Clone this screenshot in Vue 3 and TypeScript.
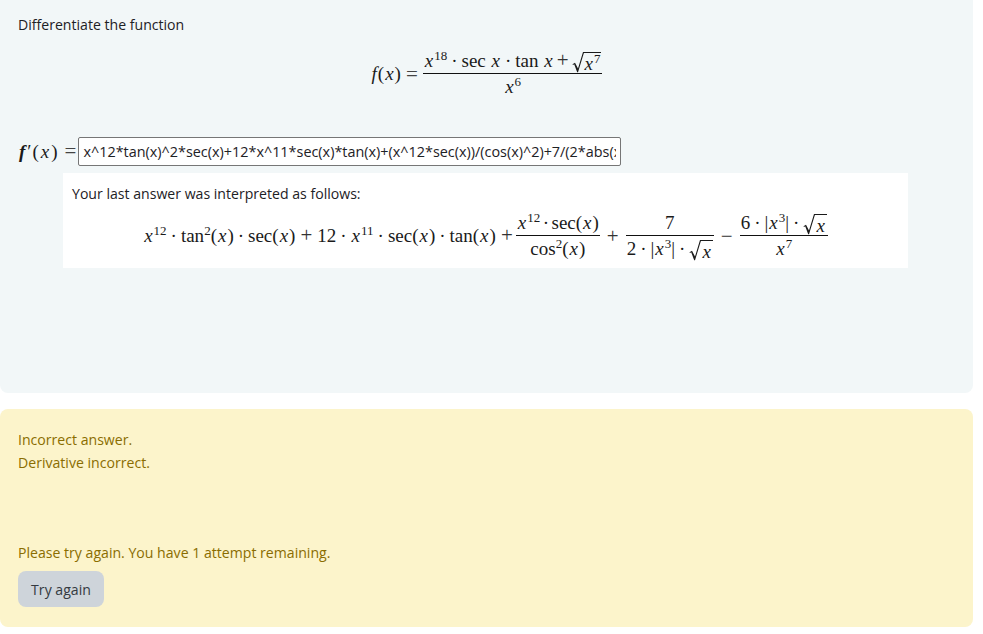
<script setup lang="ts">
const answer =
  'x^12*tan(x)^2*sec(x)+12*x^11*sec(x)*tan(x)+(x^12*sec(x))/(cos(x)^2)+7/(2*abs(x^3)*sqrt(x))-(6*abs(x^3)*sqrt(x))/x^7';
</script>

<template>
  <div class="page">
    <section class="card question">
      <p class="prompt">Differentiate the function</p>

      <div class="display first">
        <span class="m"><i>f</i>(<i>x</i>)</span>
        <span class="m rel">=</span>
        <span class="frac">
          <span class="num">
            <i>x</i><sup>18</sup><span class="op">·</span>sec <i>x</i><span class="op">·</span>tan <i>x</i><span class="plus">+</span><span class="sqrt"><svg class="rad" viewBox="0 0 12 20" preserveAspectRatio="none"><path d="M0.5 12 L3 10.6 L6 16 L11 1 L12 1 L12 2 L11.8 2 L6 19.4 L5.2 19.4 L2.2 12 L1 12.7 Z" /></svg><span class="under"><i>x</i><sup>7</sup></span></span>
          </span>
          <span class="den"><i>x</i><sup>6</sup></span>
        </span>
      </div>

      <div class="answer-row">
        <span class="m lhs"><b><i>f</i></b>′(<i>x</i>)</span>
        <span class="m rel eq">=</span>
        <input class="answer" type="text" :value="answer" />
      </div>

      <div class="preview">
        <p>Your last answer was interpreted as follows:</p>
        <div class="display second">
          <span class="m">
            <i>x</i><sup>12</sup><span class="op">·</span>tan<sup>2</sup>(<i>x</i>)<span class="op">·</span>sec(<i>x</i>)<span class="plus">+</span>12<span class="op">·</span><i>x</i><sup>11</sup><span class="op">·</span>sec(<i>x</i>)<span class="op">·</span>tan(<i>x</i>)<span class="plus last">+</span>
          </span>
          <span class="frac tight">
            <span class="num"><i>x</i><sup>12</sup><span class="op">·</span>sec(<i>x</i>)</span>
            <span class="den">cos<sup>2</sup>(<i>x</i>)</span>
          </span>
          <span class="m bin">+</span>
          <span class="frac">
            <span class="num">7</span>
            <span class="den">2<span class="op">·</span>|<i>x</i><sup>3</sup>|<span class="op">·</span><span class="sqrt"><svg class="rad" viewBox="0 0 12 20" preserveAspectRatio="none"><path d="M0.5 12 L3 10.6 L6 16 L11 1 L12 1 L12 2 L11.8 2 L6 19.4 L5.2 19.4 L2.2 12 L1 12.7 Z" /></svg><span class="under"><i>x</i></span></span></span>
          </span>
          <span class="m bin">−</span>
          <span class="frac">
            <span class="num">6<span class="op">·</span>|<i>x</i><sup>3</sup>|<span class="op">·</span><span class="sqrt"><svg class="rad" viewBox="0 0 12 20" preserveAspectRatio="none"><path d="M0.5 12 L3 10.6 L6 16 L11 1 L12 1 L12 2 L11.8 2 L6 19.4 L5.2 19.4 L2.2 12 L1 12.7 Z" /></svg><span class="under"><i>x</i></span></span></span>
            <span class="den"><i>x</i><sup>7</sup></span>
          </span>
        </div>
      </div>
    </section>

    <section class="card feedback">
      <p>Incorrect answer.</p>
      <p>Derivative incorrect.</p>
      <p class="retry">Please try again. You have 1 attempt remaining.</p>
      <button class="try" type="button">Try again</button>
    </section>
  </div>
</template>

<style>
html,
body {
  background: #fff;
  overflow: hidden;
}
</style>

<style scoped>
.page {
  width: 973px;
  height: 634px;
  font-family: "Open Sans", "Noto Sans", sans-serif;
  font-size: 14.1px;
  line-height: 23px;
  color: #1d2125;
}

.card {
  box-sizing: border-box;
  padding: 0 18px;
  border-radius: 8px;
}

p {
  margin: 0;
}

.question {
  height: 393px;
  padding-top: 13px;
  background: #f2f7f8;
  border-radius: 0 0 8px 8px;
}

.display {
  display: flex;
  justify-content: center;
  align-items: center;
  font-family: "Liberation Serif", "DejaVu Serif", serif;
  font-size: 19px;
  line-height: 26px;
  white-space: nowrap;
  color: #1a1a1a;
}

.first {
  margin-top: 14px;
  height: 48px;
}

.display i,
.answer-row i {
  padding: 0 1px;
}

.rel {
  margin: 0 5px;
  font-size: 21px;
  color: #444;
}

.frac {
  display: inline-flex;
  flex-direction: column;
  align-items: center;
  text-align: center;
}

.num {
  align-self: stretch;
  display: block;
  height: 25px;
  padding: 0 1px;
  border-bottom: 1.4px solid #111;
}

.den {
  display: block;
  height: 26px;
  padding: 0 1px;
}

sup {
  font-size: 13px;
  line-height: 0;
  vertical-align: 7px;
}

.op {
  margin: 0 4px;
}

.tight .op {
  margin: 0 2.5px;
}

.plus {
  margin: 0 3px;
  font-size: 21px;
  line-height: 0;
  color: #333;
}

.second .plus {
  margin: 0 5px;
}

.second .plus.last {
  margin-right: 3px;
}

.sqrt {
  display: inline-flex;
  align-items: stretch;
  height: 22px;
  vertical-align: -6px;
  line-height: 21px;
}

.rad {
  width: 12px;
  height: 22px;
  flex: none;
}

.rad path {
  fill: #1a1a1a;
}

.under {
  display: block;
  height: 20px;
  border-top: 1px solid #1a1a1a;
  margin-top: 1px;
  padding-right: 1px;
}

.answer-row {
  display: flex;
  align-items: center;
  height: 29px;
  margin-top: 39px;
  font-family: "Liberation Serif", "DejaVu Serif", serif;
  font-size: 19px;
  color: #1a1a1a;
}

.lhs {
  white-space: nowrap;
  letter-spacing: 1px;
}

.eq {
  margin: 0 2px 0 6px;
}

.answer {
  box-sizing: border-box;
  width: 543px;
  height: 29px;
  padding: 0 4px;
  border: 1px solid #767676;
  border-radius: 2px;
  background: #fff;
  color: #1d2125;
  font-family: "Open Sans", "Noto Sans", sans-serif;
  font-size: 14.4px;
}

.preview {
  box-sizing: border-box;
  width: 845px;
  height: 95px;
  margin: 7px 0 0 45px;
  padding: 9px 9px 0;
  background: #fff;
}

.second {
  margin-top: 4px;
  height: 54px;
}

.bin {
  margin: 0 7px;
  font-size: 21px;
  color: #333;
}

.feedback {
  height: 218px;
  margin-top: 16px;
  padding-top: 19px;
  background: #fcf4cb;
  color: #8a6d00;
}

.retry {
  margin-top: 67px;
}

.try {
  display: block;
  box-sizing: border-box;
  height: 36px;
  width: 86px;
  margin-top: 7px;
  padding: 0;
  border: 0;
  border-radius: 8px;
  background: #ced4da;
  color: #343a40;
  font: inherit;
}
</style>
